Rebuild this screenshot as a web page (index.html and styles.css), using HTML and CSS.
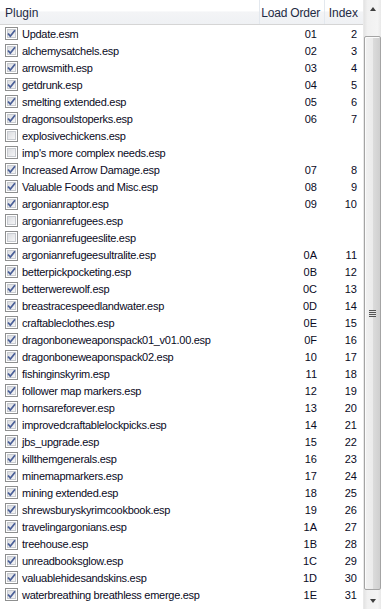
FILE: index.html
```html
<!DOCTYPE html>
<html lang="en">
<head>
  <meta charset="UTF-8" />
  <title>Plugins</title>
  <link rel="stylesheet" href="styles.css">
</head>
<body>

  <svg width="0" height="0" class="defs">
    <defs>
      <linearGradient id="boxfill" x1="0" y1="0" x2="1" y2="1">
        <stop offset="0" stop-color="#d9dbdf"/>
        <stop offset="1" stop-color="#f7f7f8"/>
      </linearGradient>
      <symbol id="box" viewBox="0 0 13 13">
        <rect x="0.5" y="0.5" width="12" height="12" fill="#fff" stroke="#8e8f8f"/>
        <rect x="2.5" y="2.5" width="8" height="8" fill="url(#boxfill)" stroke="#c8cbd0"/>
      </symbol>
      <symbol id="tick" viewBox="0 0 13 13">
        <path d="M3 6.5 L5.3 9.2 L10 3.2" fill="none" stroke="#4a5f97" stroke-width="1.8"/>
      </symbol>
    </defs>
  </svg>

  <div class="listview">
    <div class="list">
      <div class="header">
        <div class="col plugin">Plugin</div>
        <div class="col order">Load Order</div>
        <div class="col index">Index</div>
      </div>

      <div class="rows">
        <div class="row on"><span class="name"><svg class="chk"><use href="#box"/><use href="#tick"/></svg>Update.esm</span><span class="num">01</span><span class="num">2</span></div>
        <div class="row on"><span class="name"><svg class="chk"><use href="#box"/><use href="#tick"/></svg>alchemysatchels.esp</span><span class="num">02</span><span class="num">3</span></div>
        <div class="row on"><span class="name"><svg class="chk"><use href="#box"/><use href="#tick"/></svg>arrowsmith.esp</span><span class="num">03</span><span class="num">4</span></div>
        <div class="row on"><span class="name"><svg class="chk"><use href="#box"/><use href="#tick"/></svg>getdrunk.esp</span><span class="num">04</span><span class="num">5</span></div>
        <div class="row on"><span class="name"><svg class="chk"><use href="#box"/><use href="#tick"/></svg>smelting extended.esp</span><span class="num">05</span><span class="num">6</span></div>
        <div class="row on"><span class="name"><svg class="chk"><use href="#box"/><use href="#tick"/></svg>dragonsoulstoperks.esp</span><span class="num">06</span><span class="num">7</span></div>
        <div class="row"><span class="name"><svg class="chk"><use href="#box"/></svg>explosivechickens.esp</span><span class="num"></span><span class="num"></span></div>
        <div class="row"><span class="name"><svg class="chk"><use href="#box"/></svg>imp's more complex needs.esp</span><span class="num"></span><span class="num"></span></div>
        <div class="row on"><span class="name"><svg class="chk"><use href="#box"/><use href="#tick"/></svg>Increased Arrow Damage.esp</span><span class="num">07</span><span class="num">8</span></div>
        <div class="row on"><span class="name"><svg class="chk"><use href="#box"/><use href="#tick"/></svg>Valuable Foods and Misc.esp</span><span class="num">08</span><span class="num">9</span></div>
        <div class="row on"><span class="name"><svg class="chk"><use href="#box"/><use href="#tick"/></svg>argonianraptor.esp</span><span class="num">09</span><span class="num">10</span></div>
        <div class="row"><span class="name"><svg class="chk"><use href="#box"/></svg>argonianrefugees.esp</span><span class="num"></span><span class="num"></span></div>
        <div class="row"><span class="name"><svg class="chk"><use href="#box"/></svg>argonianrefugeeslite.esp</span><span class="num"></span><span class="num"></span></div>
        <div class="row on"><span class="name"><svg class="chk"><use href="#box"/><use href="#tick"/></svg>argonianrefugeesultralite.esp</span><span class="num">0A</span><span class="num">11</span></div>
        <div class="row on"><span class="name"><svg class="chk"><use href="#box"/><use href="#tick"/></svg>betterpickpocketing.esp</span><span class="num">0B</span><span class="num">12</span></div>
        <div class="row on"><span class="name"><svg class="chk"><use href="#box"/><use href="#tick"/></svg>betterwerewolf.esp</span><span class="num">0C</span><span class="num">13</span></div>
        <div class="row on"><span class="name"><svg class="chk"><use href="#box"/><use href="#tick"/></svg>breastracespeedlandwater.esp</span><span class="num">0D</span><span class="num">14</span></div>
        <div class="row on"><span class="name"><svg class="chk"><use href="#box"/><use href="#tick"/></svg>craftableclothes.esp</span><span class="num">0E</span><span class="num">15</span></div>
        <div class="row on"><span class="name"><svg class="chk"><use href="#box"/><use href="#tick"/></svg>dragonboneweaponspack01_v01.00.esp</span><span class="num">0F</span><span class="num">16</span></div>
        <div class="row on"><span class="name"><svg class="chk"><use href="#box"/><use href="#tick"/></svg>dragonboneweaponspack02.esp</span><span class="num">10</span><span class="num">17</span></div>
        <div class="row on"><span class="name"><svg class="chk"><use href="#box"/><use href="#tick"/></svg>fishinginskyrim.esp</span><span class="num">11</span><span class="num">18</span></div>
        <div class="row on"><span class="name"><svg class="chk"><use href="#box"/><use href="#tick"/></svg>follower map markers.esp</span><span class="num">12</span><span class="num">19</span></div>
        <div class="row on"><span class="name"><svg class="chk"><use href="#box"/><use href="#tick"/></svg>hornsareforever.esp</span><span class="num">13</span><span class="num">20</span></div>
        <div class="row on"><span class="name"><svg class="chk"><use href="#box"/><use href="#tick"/></svg>improvedcraftablelockpicks.esp</span><span class="num">14</span><span class="num">21</span></div>
        <div class="row on"><span class="name"><svg class="chk"><use href="#box"/><use href="#tick"/></svg>jbs_upgrade.esp</span><span class="num">15</span><span class="num">22</span></div>
        <div class="row on"><span class="name"><svg class="chk"><use href="#box"/><use href="#tick"/></svg>killthemgenerals.esp</span><span class="num">16</span><span class="num">23</span></div>
        <div class="row on"><span class="name"><svg class="chk"><use href="#box"/><use href="#tick"/></svg>minemapmarkers.esp</span><span class="num">17</span><span class="num">24</span></div>
        <div class="row on"><span class="name"><svg class="chk"><use href="#box"/><use href="#tick"/></svg>mining extended.esp</span><span class="num">18</span><span class="num">25</span></div>
        <div class="row on"><span class="name"><svg class="chk"><use href="#box"/><use href="#tick"/></svg>shrewsburyskyrimcookbook.esp</span><span class="num">19</span><span class="num">26</span></div>
        <div class="row on"><span class="name"><svg class="chk"><use href="#box"/><use href="#tick"/></svg>travelingargonians.esp</span><span class="num">1A</span><span class="num">27</span></div>
        <div class="row on"><span class="name"><svg class="chk"><use href="#box"/><use href="#tick"/></svg>treehouse.esp</span><span class="num">1B</span><span class="num">28</span></div>
        <div class="row on"><span class="name"><svg class="chk"><use href="#box"/><use href="#tick"/></svg>unreadbooksglow.esp</span><span class="num">1C</span><span class="num">29</span></div>
        <div class="row on"><span class="name"><svg class="chk"><use href="#box"/><use href="#tick"/></svg>valuablehidesandskins.esp</span><span class="num">1D</span><span class="num">30</span></div>
        <div class="row on"><span class="name"><svg class="chk"><use href="#box"/><use href="#tick"/></svg>waterbreathing breathless emerge.esp</span><span class="num">1E</span><span class="num">31</span></div>
      </div>
    </div>

    <!-- vertical scrollbar -->
    <div class="scrollbar">
      <div class="arrow up"></div>
      <div class="track">
        <div class="thumb"><span class="grip"></span></div>
      </div>
      <div class="arrow down"></div>
    </div>
  </div>

</body>
</html>
```

FILE: styles.css
```css
body {
  margin: 0;
  background: #fff;
  font-family: 'Liberation Sans', Arial, sans-serif;
  font-size: 11px;
  color: #000;
}
.defs {
  position: absolute;
}
.listview {
  display: flex;
  width: 381px;
  height: 609px;
  overflow: hidden;
}
.list {
  width: 363px;
}
.header {
  display: grid;
  grid-template-columns: 260px 65px 38px;
  height: 24px;
  background: linear-gradient(#ffffff, #ffffff 45%, #f3f4f6 50%, #eff1f4);
  border-bottom: 1px solid #d5d5d5;
  color: #1e2a44;
  font-size: 12px;
  white-space: nowrap;
}
.header .col {
  display: flex;
  align-items: center;
  padding: 1px 5px 0;
  border-right: 1px solid #e3e8ee;
  overflow: hidden;
}
.header .order, .header .index {
  justify-content: flex-end;
}
.header .order {
  padding-right: 4px;
  letter-spacing: -0.2px;
}
.header .index {
  border-right: none;
  padding-right: 5px;
}
.row {
  display: grid;
  grid-template-columns: 260px 65px 38px;
  height: 17px;
  align-items: center;
}
.name {
  display: flex;
  align-items: center;
  padding-left: 5px;
  white-space: nowrap;
  letter-spacing: -0.28px;
  color: #0a0a24;
}
.chk {
  width: 13px;
  height: 13px;
  margin-right: 4px;
  flex: none;
}
.num {
  text-align: right;
  padding-right: 8px;
  color: #0a0a24;
}
.row .num:last-child {
  padding-right: 6px;
}
.scrollbar {
  width: 18px;
  display: flex;
  flex-direction: column;
  background: linear-gradient(to right, #e3e3e3, #f0f0f0 20%, #f4f4f4 80%, #e8e8e8);
  border-left: 1px solid #e9e9e9;
}
.arrow {
  height: 17px;
  flex: none;
  display: flex;
  align-items: center;
  justify-content: center;
}
.arrow::before {
  content: "";
  border-left: 3.5px solid transparent;
  border-right: 3.5px solid transparent;
}
.arrow.up::before {
  border-bottom: 4px solid #3f3f3f;
}
.arrow.down::before {
  border-top: 4px solid #3f3f3f;
}
.track {
  flex: 1;
  padding: 1px 0;
  display: flex;
}
.thumb {
  flex: 1;
  margin: 18px 0 1px 0;
  border: 1px solid #a4a4a4;
  border-radius: 2px;
  background: linear-gradient(to right, #f2f2f2, #ebebeb 50%, #dcdcdc 51%, #cfcfcf);
  box-shadow: inset 1px 1px 0 #fbfbfb;
  display: flex;
  align-items: center;
  justify-content: center;
}
.grip {
  width: 7px;
  height: 7px;
  background: repeating-linear-gradient(#545454 0, #545454 1px, #e4e4e4 1px, #e4e4e4 2px);
}
```
